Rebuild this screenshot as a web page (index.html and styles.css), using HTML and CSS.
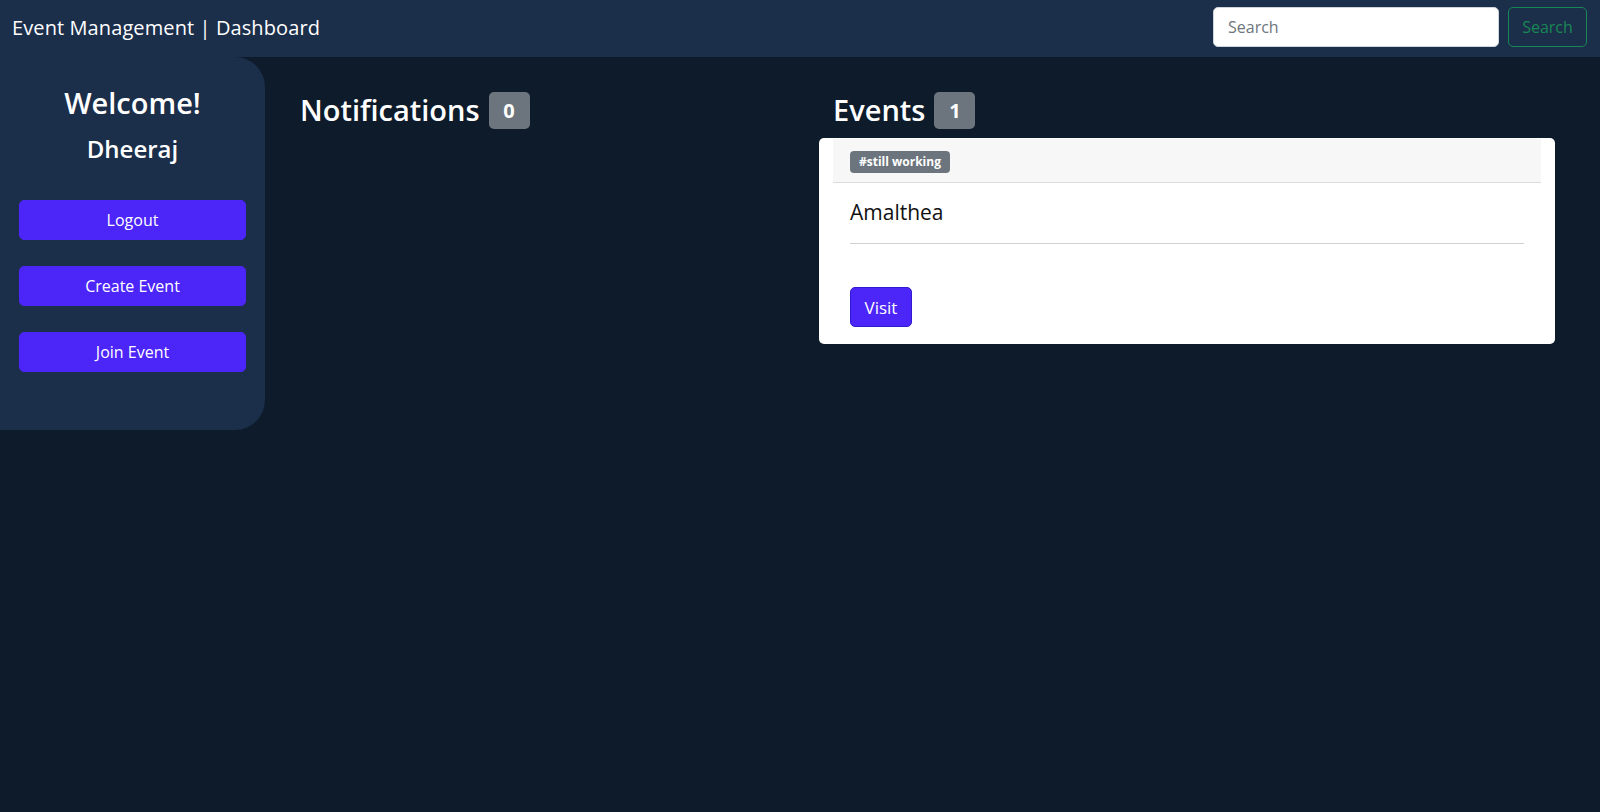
FILE: index.html
```html
<!DOCTYPE html>
<html lang="en">
<head>
<meta charset="utf-8">
<title>Event Management | Dashboard</title>
<link rel="stylesheet" href="styles.css">
</head>
<body>
<nav class="navbar">
  <div class="brand">Event Management | Dashboard</div>
  <form class="search-form">
    <input class="search-input" type="text" placeholder="Search">
    <button class="search-btn" type="button">Search</button>
  </form>
</nav>
<div class="layout">
  <aside class="sidebar">
    <h2 class="welcome">Welcome!</h2>
    <h3 class="username">Dheeraj</h3>
    <div class="side-actions">
      <button class="btn-primary side-btn" type="button">Logout</button>
      <button class="btn-primary side-btn" type="button">Create Event</button>
      <button class="btn-primary side-btn" type="button">Join Event</button>
    </div>
  </aside>
  <main class="main">
    <section class="col col-notifications">
      <h2 class="section-title">Notifications <span class="count-badge">0</span></h2>
    </section>
    <section class="col col-events">
      <h2 class="section-title">Events <span class="count-badge">1</span></h2>
      <div class="card">
        <div class="card-header"><span class="tag">#still working</span></div>
        <div class="card-body">
          <h5 class="card-title">Amalthea</h5>
          <hr class="divider">
          <button class="btn-primary visit-btn" type="button">Visit</button>
        </div>
      </div>
    </section>
  </main>
</div>
</body>
</html>
```
FILE: styles.css
```css
* { box-sizing: border-box; }
html, body { margin: 0; padding: 0; }
body {
  background: #0d1b2b;
  font-family: "Open Sans", "Noto Sans", sans-serif;
  color: #fff;
  min-height: 812px;
}
.navbar {
  height: 57px;
  background: #1b2e4a;
  display: flex;
  align-items: center;
  justify-content: space-between;
  padding: 0 13px 3px 12px;
}
.brand {
  font-size: 20px;
  color: #fff;
  letter-spacing: 0.1px;
}
.search-form { display: flex; gap: 9px; }
.search-input {
  width: 286px;
  height: 40px;
  border: 1px solid #ced4da;
  border-radius: 5px;
  padding: 0 14px;
  font-family: inherit;
  font-size: 16px;
  color: #212529;
  background: #fff;
}
.search-input::placeholder { color: #6c757d; }
.search-btn {
  width: 79px;
  height: 40px;
  border: 1px solid #198754;
  border-radius: 5px;
  background: transparent;
  color: #198754;
  font-family: inherit;
  font-size: 16px;
}
.layout { display: flex; align-items: flex-start; }
.sidebar {
  width: 265px;
  height: 373px;
  background: #1b2e4a;
  border-radius: 0 30px 30px 0;
  padding: 29px 19px 0;
  text-align: center;
  flex: none;
}
.welcome { margin: 0; font-size: 29px; font-weight: 600; line-height: 1.2; }
.username { margin: 14px 0 0; font-size: 24px; font-weight: 600; line-height: 1.2; }
.side-actions { display: flex; flex-direction: column; gap: 26px; margin-top: 36px; }
.btn-primary {
  background: #4c25f8;
  color: #fff;
  border: 1px solid #4c25f8;
  border-radius: 5px;
  font-family: inherit;
}
.side-btn { width: 227px; height: 40px; font-size: 16px; }
.main {
  display: grid;
  grid-template-columns: 533px 736px;
  padding-left: 21px;
  padding-top: 33px;
}
.section-title {
  margin: 0;
  padding-left: 14px;
  font-size: 29px;
  font-weight: 600;
  line-height: 36px;
  display: flex;
  align-items: center;
  gap: 9px;
}
.section-title .count-badge { margin-top: 2px; }
.count-badge {
  display: inline-flex;
  align-items: center;
  justify-content: center;
  width: 41px;
  height: 37px;
  background: #6c757d;
  border-radius: 5px;
  font-size: 20px;
  font-weight: 700;
}
.card {
  margin-top: 9px;
  background: #fff;
  border-radius: 5px;
  padding: 1px 14px 0;
  color: #212529;
}
.card-header {
  display: flex;
  align-items: flex-start;
  background: #f7f7f7;
  border-bottom: 1px solid #dcdcdc;
  padding: 12px 17px 0;
  height: 44px;
}
.tag {
  display: inline-block;
  background: #6c757d;
  color: #fff;
  font-size: 12px;
  font-weight: 700;
  line-height: 22px;
  height: 22px;
  padding: 0 9px;
  border-radius: 4px;
}
.card-body { padding: 17px 17px 17px; }
.card-title { margin: 0; font-size: 21px; font-weight: 500; line-height: 25px; color: #111; }
.divider { margin: 18px 0 0; border: 0; border-top: 1px solid #d0d0d0; }
.visit-btn {
  margin-top: 43px;
  width: 62px;
  height: 40px;
  font-size: 17px;
  border-color: #2f1bd0;
}
```
